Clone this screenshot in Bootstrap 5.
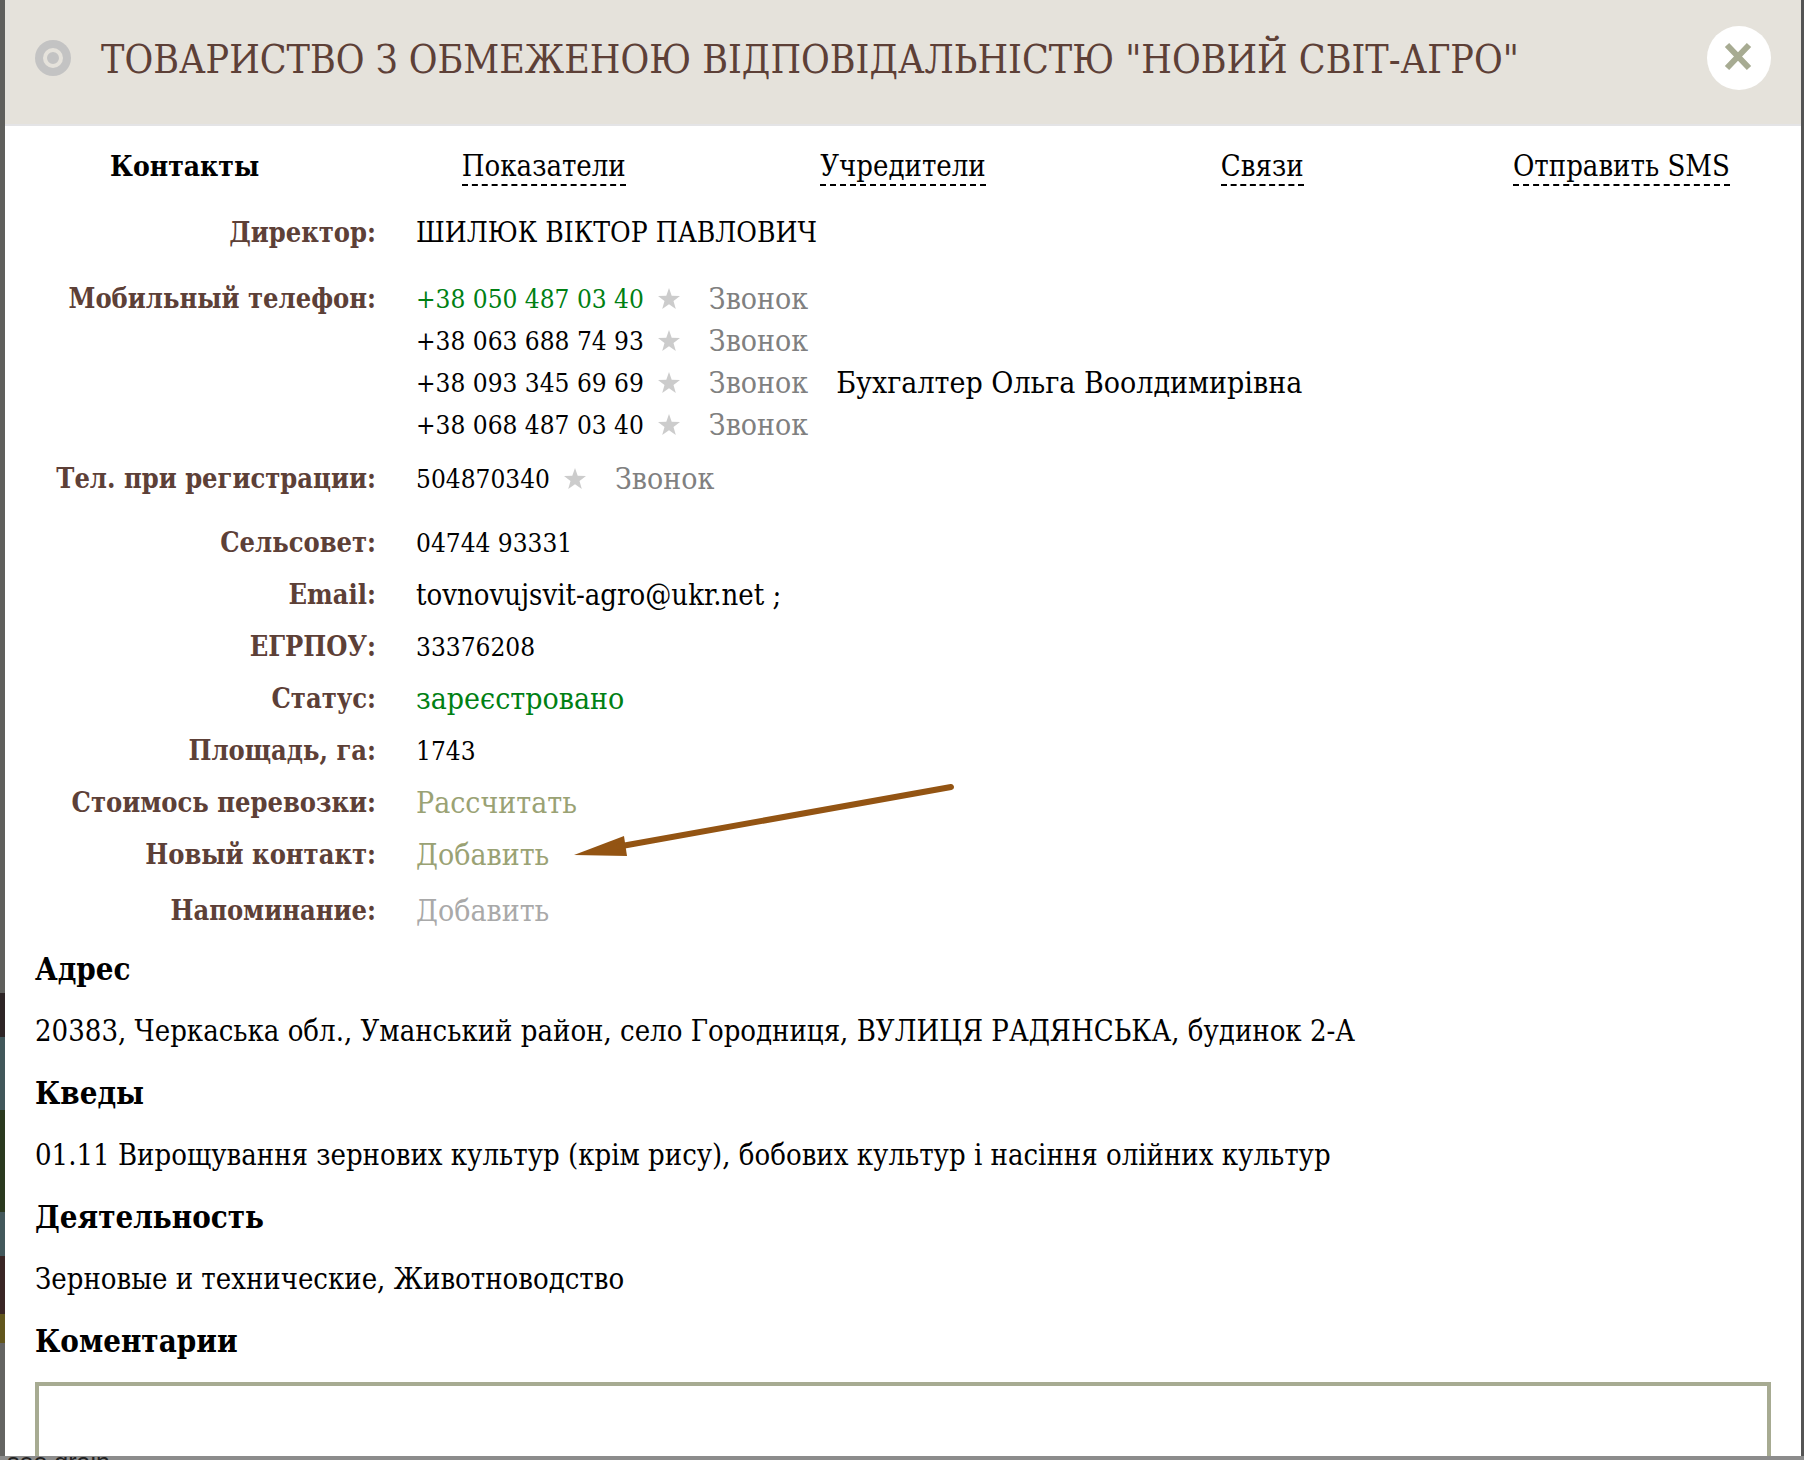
<!DOCTYPE html>
<html lang="ru">
<head>
<meta charset="utf-8">
<meta name="viewport" content="width=device-width, initial-scale=1">
<title>ТОВ "НОВИЙ СВІТ-АГРО"</title>
<link href="https://cdn.jsdelivr.net/npm/bootstrap@5.3.0/dist/css/bootstrap.min.css" rel="stylesheet">
<style>
  :root { --brown: #5d4037; --olive: #a7ab92; --olive-link: #9aa274; }
  body {
    font-family: "Roboto Slab", "DejaVu Serif Condensed", "DejaVu Serif", serif;
    font-size: 29px; line-height: 42px; color: #000;
    background: linear-gradient(90deg, transparent 50%, #545454 50%), linear-gradient(#5f5f5c 0 68%, #2e2526 68% 71%, #41575a 71% 76%, #2b3a1f 76% 83%, #43585b 83% 86%, #3a2625 86% 90%, #62561d 90% 92%, #646462 92%);
  }
  .page-shell { height: 100vh; padding: 0 3px 0 5px; }
  .company-panel { min-height: 0; }
  .panel-head { background: #e5e2db; border-bottom: 2px solid #e4e4e6; padding: 0 30px; min-height: 126px; }
  .panel-head h1 { font-size: 39px; line-height: 48px; color: var(--brown); padding-left: 30px; }
  .close-btn { width: 64px; height: 64px; }
  .tab-bar { padding-top: 19px; }
  .tab-link { color: #000; text-decoration: none; border-bottom: 2px dashed #000; line-height: 36px; display: inline-block; }
  .tab-link.active { border-color: transparent; font-size: 28px; font-weight: 700; }
  .info-list { margin: 20px 0 0; }
  .info-row { padding: 5px 0; gap: 40px; }
  .info-row dt { width: 371px; flex: none; text-align: right; font-size: 27px; color: var(--brown); }
  .num { font-size: 26px; }
  .caps { font-size: 28px; }
  .wide-text { font-size: 30px; }
  .gap-tall { margin-bottom: 14px; }
  .gap-mid { margin-bottom: 12px; }
  .gap-low { margin-bottom: 4px; }
  .gap-tiny { margin-bottom: 2px; }
  .star-btn { width: 24px; height: 42px; margin-left: 13px; }
  .call-link { color: #808080; text-decoration: none; margin: 0 28px; font-size: 30px; }
  .olive-link { color: var(--olive-link); text-decoration: none; }
  .muted-link { color: #a9a9a9; text-decoration: none; }
  .ok-text { color: #008013; }
  .details { padding: 1px 30px 0; }
  .details h2 { font-size: 31px; line-height: 42px; font-weight: 700; margin: 0; padding: 10px 0; }
  .details p { margin: 0; padding: 10px 0; }
  .comment-box { border: 4px solid var(--olive); height: 200px; resize: none; margin-top: 10px; }
  .pointer-arrow { left: 569px; top: 778px; pointer-events: none; }
  .page-foot { height: 4px; background: #8c8c8c; margin: 0 -3px 0 -5px; }
  .page-foot span { font: 25px/30px "Liberation Sans", sans-serif; margin-top: -9px; padding-left: 7px; color: #222; }
</style>
</head>
<body>
<div class="page-shell d-flex flex-column overflow-hidden">
  <main class="company-panel bg-white flex-fill overflow-hidden">
    <header class="panel-head d-flex align-items-center">
      <svg width="36" height="36" viewBox="0 0 36 36" class="flex-shrink-0 mb-2" aria-hidden="true"><circle cx="18" cy="18" r="18" fill="#c3c3c3"/><circle cx="18" cy="18" r="8" fill="none" stroke="#e5e2db" stroke-width="4"/></svg>
      <h1 class="mb-1 flex-fill fw-normal">ТОВАРИСТВО З ОБМЕЖЕНОЮ ВІДПОВІДАЛЬНІСТЮ "НОВИЙ СВІТ-АГРО"</h1>
      <button type="button" class="close-btn btn bg-white rounded-circle border-0 p-0 mb-2 flex-shrink-0 d-flex" aria-label="Закрыть"><svg width="64" height="64" viewBox="0 0 64 64"><path d="M20 19L42 42M42 19L20 42" stroke="#a7ab92" stroke-width="6"/></svg></button>
    </header>
    <nav class="tab-bar row g-0 text-center">
      <div class="col"><a class="tab-link active" href="#" aria-current="page">Контакты</a></div>
      <div class="col"><a class="tab-link" href="#">Показатели</a></div>
      <div class="col"><a class="tab-link" href="#">Учредители</a></div>
      <div class="col"><a class="tab-link" href="#">Связи</a></div>
      <div class="col"><a class="tab-link" href="#">Отправить SMS</a></div>
    </nav>
    <dl class="info-list">
      <div class="info-row d-flex gap-tall"><dt>Директор:</dt><dd class="mb-0 caps">ШИЛЮК ВІКТОР ПАВЛОВИЧ</dd></div>
      <div class="info-row d-flex gap-tiny">
        <dt>Мобильный телефон:</dt>
        <dd class="mb-0">
          <div class="d-flex"><span class="num ok-text">+38 050 487 03 40</span><button type="button" class="star-btn btn border-0 p-0 d-flex align-items-center" aria-label="Отметить"><svg width="24" height="24" viewBox="0 0 24 24"><path d="M12 1l2.700 7.700 8.300.200-6.500 5 2.300 8.100-6.800-4.700L5.200 22l2.300-8.100L1 8.900l8.300-.2z" fill="#ccc"/></svg></button><a class="call-link" href="#">Звонок</a></div>
          <div class="d-flex"><span class="num">+38 063 688 74 93</span><button type="button" class="star-btn btn border-0 p-0 d-flex align-items-center" aria-label="Отметить"><svg width="24" height="24" viewBox="0 0 24 24"><path d="M12 1l2.700 7.700 8.300.200-6.500 5 2.300 8.100-6.800-4.700L5.200 22l2.300-8.100L1 8.900l8.300-.2z" fill="#ccc"/></svg></button><a class="call-link" href="#">Звонок</a></div>
          <div class="d-flex"><span class="num">+38 093 345 69 69</span><button type="button" class="star-btn btn border-0 p-0 d-flex align-items-center" aria-label="Отметить"><svg width="24" height="24" viewBox="0 0 24 24"><path d="M12 1l2.700 7.700 8.300.200-6.500 5 2.300 8.100-6.800-4.700L5.200 22l2.300-8.100L1 8.900l8.300-.2z" fill="#ccc"/></svg></button><a class="call-link" href="#">Звонок</a><span class="wide-text">Бухгалтер Ольга Воолдимирівна</span></div>
          <div class="d-flex"><span class="num">+38 068 487 03 40</span><button type="button" class="star-btn btn border-0 p-0 d-flex align-items-center" aria-label="Отметить"><svg width="24" height="24" viewBox="0 0 24 24"><path d="M12 1l2.700 7.700 8.300.200-6.500 5 2.300 8.100-6.800-4.700L5.200 22l2.300-8.100L1 8.900l8.300-.2z" fill="#ccc"/></svg></button><a class="call-link" href="#">Звонок</a></div>
        </dd>
      </div>
      <div class="info-row d-flex gap-mid"><dt>Тел. при регистрации:</dt><dd class="mb-0 d-flex"><span class="num">504870340</span><button type="button" class="star-btn btn border-0 p-0 d-flex align-items-center" aria-label="Отметить"><svg width="24" height="24" viewBox="0 0 24 24"><path d="M12 1l2.700 7.700 8.300.200-6.500 5 2.300 8.100-6.800-4.700L5.200 22l2.300-8.100L1 8.900l8.300-.2z" fill="#ccc"/></svg></button><a class="call-link" href="#">Звонок</a></dd></div>
      <div class="info-row d-flex"><dt>Сельсовет:</dt><dd class="mb-0 num">04744 93331</dd></div>
      <div class="info-row d-flex"><dt>Email:</dt><dd class="mb-0">tovnovujsvit-agro@ukr.net ;</dd></div>
      <div class="info-row d-flex"><dt>ЕГРПОУ:</dt><dd class="mb-0 num">33376208</dd></div>
      <div class="info-row d-flex"><dt>Статус:</dt><dd class="mb-0 ok-text wide-text">зареєстровано</dd></div>
      <div class="info-row d-flex"><dt>Площадь, га:</dt><dd class="mb-0 num">1743</dd></div>
      <div class="info-row d-flex"><dt>Стоимось перевозки:</dt><dd class="mb-0 wide-text"><a class="olive-link" href="#">Рассчитать</a></dd></div>
      <div class="info-row d-flex gap-low"><dt>Новый контакт:</dt><dd class="mb-0 wide-text"><a class="olive-link" href="#">Добавить</a></dd></div>
      <div class="info-row d-flex"><dt>Напоминание:</dt><dd class="mb-0 wide-text"><a class="muted-link" href="#">Добавить</a></dd></div>
    </dl>
    <section class="details">
      <h2>Адрес</h2>
      <p>20383, Черкаська обл., Уманський район, село Городниця, ВУЛИЦЯ РАДЯНСЬКА, будинок 2-А</p>
      <h2>Кведы</h2>
      <p>01.11 Вирощування зернових культур (крім рису), бобових культур і насіння олійних культур</p>
      <h2>Деятельность</h2>
      <p>Зерновые и технические, Животноводство</p>
      <h2><label for="comments">Коментарии</label></h2>
      <textarea id="comments" class="comment-box form-control rounded-0"></textarea>
    </section>
  </main>
  <footer class="page-foot d-flex flex-shrink-0 overflow-hidden"><span>see grain</span></footer>
</div>
<svg class="pointer-arrow position-absolute" width="390" height="84" viewBox="0 0 390 84" aria-hidden="true"><path d="M5 77L55 58L58 78z" fill="#935413"/><path d="M50 68.500L382 9" stroke="#935413" stroke-width="6" stroke-linecap="round"/></svg>
<script src="https://cdn.jsdelivr.net/npm/bootstrap@5.3.0/dist/js/bootstrap.bundle.min.js"></script>
</body>
</html>
